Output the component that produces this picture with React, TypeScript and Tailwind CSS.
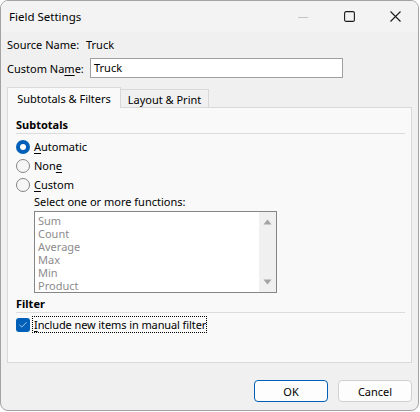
import { Check } from "lucide-react";

const FONT = { fontFamily: '"Noto Sans", "Segoe UI", sans-serif' };

function Radio({ label, under, checked }: { label: string; under: number; checked?: boolean }) {
  return (
    <div className="flex h-[19px] items-center">
      {checked ? (
        <span className="flex h-[14px] w-[14px] items-center justify-center rounded-full bg-[#005fb8]">
          <span className="h-[6px] w-[6px] rounded-full bg-white" />
        </span>
      ) : (
        <span className="h-[14px] w-[14px] rounded-full border border-[#858585] bg-[#f6f6f6]" />
      )}
      <span className="ml-[4px] pb-[1px]">
        {label.slice(0, under)}
        <span className="underline underline-offset-2">{label[under]}</span>
        {label.slice(under + 1)}
      </span>
    </div>
  );
}

const functions = ["Sum", "Count", "Average", "Max", "Min", "Product"];

export default function App() {
  return (
    <div className="h-[412px] w-[420px] whitespace-nowrap bg-white text-[11px] leading-none text-black" style={FONT}>
      <div className="h-[411px] w-[419px] overflow-hidden rounded-lg border border-[#a3a3a3] bg-[#f0f0f0]">
        {/* title bar */}
        <div className="flex h-[31px] items-center bg-[#f3f3f3]">
          <span className="flex-1 pl-[8px] text-[11.5px]">Field Settings</span>
          <div className="flex h-full w-[46px] items-center justify-center">
            <svg width="10" height="10" viewBox="0 0 10 10">
              <path d="M0 5.5 H10" stroke="#c4c4c4" strokeWidth="1" />
            </svg>
          </div>
          <div className="flex h-full w-[46px] items-center justify-center">
            <svg width="11" height="11" viewBox="0 0 11 11">
              <rect x="0.6" y="0.6" width="9.8" height="9.8" rx="1.5" fill="none" stroke="#1a1a1a" strokeWidth="1.1" />
            </svg>
          </div>
          <div className="flex h-full w-[46px] items-center justify-center">
            <svg width="11" height="11" viewBox="0 0 11 11">
              <path d="M0.5 0.5 L10.5 10.5 M10.5 0.5 L0.5 10.5" stroke="#1a1a1a" strokeWidth="1.1" />
            </svg>
          </div>
        </div>

        <div className="pl-[6px]">
          <div className="mt-[4px] flex h-[16px] items-center">
            <span className="w-[79px]">Source Name:</span>
            <span>Truck</span>
          </div>
          <div className="mt-[6px] flex h-[20px] items-center">
            <span className="w-[83px]">
              Custom Na<span className="underline underline-offset-2">m</span>e:
            </span>
            <div className="flex h-[20px] w-[253px] items-center border border-[#a0a0a0] bg-white pb-[1px] pl-[3px]">
              Truck
            </div>
          </div>

          {/* tabs */}
          <div className="mt-[9px] flex items-end">
            <div className="relative z-10 mb-[-1px] flex h-[21px] w-[114px] items-center justify-center border border-b-0 border-[#d9d9d9] bg-[#f9f9f9]">
              Subtotals &amp; Filters
            </div>
            <div className="flex h-[18px] w-[88px] items-center justify-center border border-b-0 border-l-0 border-[#d9d9d9] bg-[#f0f0f0] pt-[1px]">
              Layout &amp; Print
            </div>
          </div>

          <div className="h-[256px] w-[405px] border border-[#d9d9d9] bg-[#f9f9f9] pl-[8px] pr-[6px]">
            <div className="mt-[8px] flex h-[16px] items-center font-bold">Subtotals</div>
            <div className="mt-[1px] h-px bg-[#dcdcdc]" />
            <div className="mt-[3px]">
              <Radio label="Automatic" under={0} checked />
              <Radio label="None" under={3} />
              <Radio label="Custom" under={0} />
            </div>
            <div className="ml-[18px]">
              <div className="flex h-[16px] items-center pb-[1px]">Select one or more functions:</div>
              <div className="mt-[1px] flex h-[82px] w-[243px] border border-[#868686] bg-white">
                <div className="flex-1 pl-[3px] pt-[2px] text-[#8c8c8c]">
                  {functions.map((f) => (
                    <div key={f} className="h-[13px] leading-[13px]">
                      {f}
                    </div>
                  ))}
                </div>
                <div className="flex w-[17px] flex-col items-center justify-between bg-[#f0f0f0] py-[7px]">
                  <svg width="9" height="6" viewBox="0 0 9 6">
                    <path d="M4.5 0.5 L8.5 5.5 L0.5 5.5 Z" fill="#a3a3a3" />
                  </svg>
                  <svg width="9" height="6" viewBox="0 0 9 6">
                    <path d="M0.5 0.5 L8.5 0.5 L4.5 5.5 Z" fill="#a3a3a3" />
                  </svg>
                </div>
              </div>
            </div>

            <div className="mt-[2px] flex h-[16px] items-center font-bold">Filter</div>
            <div className="mt-[1px] h-px bg-[#dcdcdc]" />
            <div className="mt-[3px] flex h-[17px] items-center">
              <span className="flex h-[14px] w-[14px] items-center justify-center rounded-[3px] bg-[#005fb8] text-white">
                <Check size={10} strokeWidth={1.6} />
              </span>
              <span className="ml-[2px] flex h-[17px] items-center border border-dotted border-black pb-[1px] pl-[1px] pr-0 tracking-[-0.1px]">
                <span className="underline underline-offset-2">I</span>nclude new items in manual filter
              </span>
            </div>
          </div>

          <div className="mt-[17px] flex w-[405px] justify-end gap-[10px]">
            <button className="flex h-[22px] w-[74px] items-center justify-center rounded-[4px] border border-[#005fb8] bg-[#fdfdfd]">
              OK
            </button>
            <button className="flex h-[22px] w-[74px] items-center justify-center rounded-[4px] border border-[#d0d0d0] bg-[#fdfdfd]">
              Cancel
            </button>
          </div>
        </div>
      </div>
    </div>
  );
}
